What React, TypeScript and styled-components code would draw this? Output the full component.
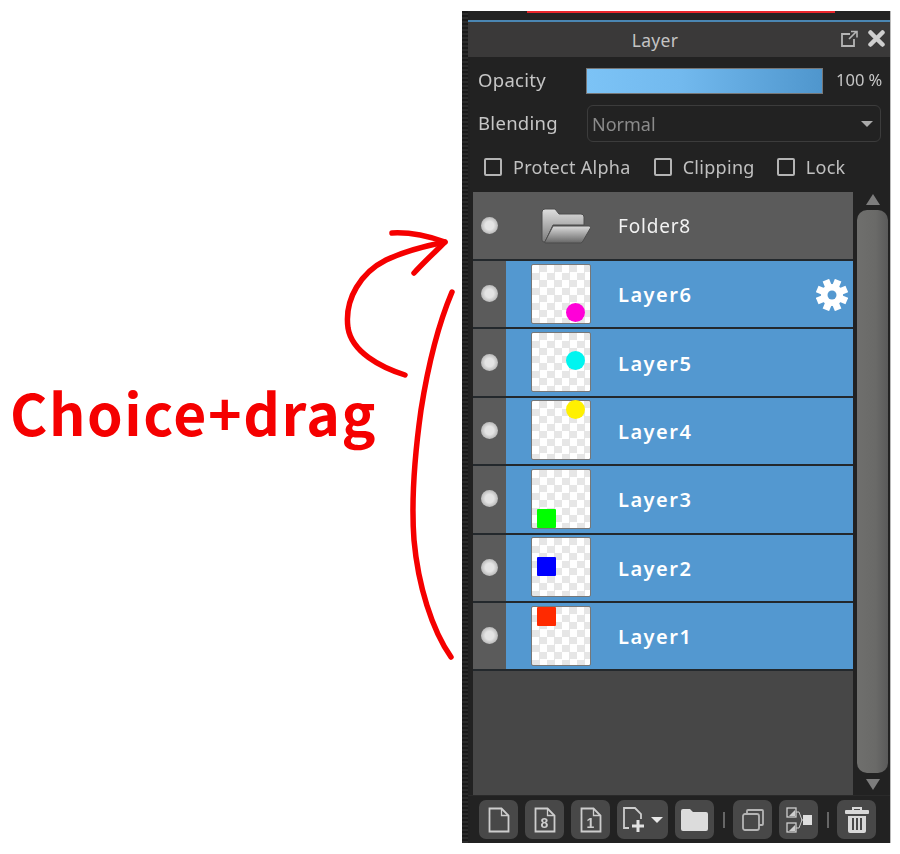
import React from "react"
import styled, { createGlobalStyle } from "styled-components"

const GlobalStyle = createGlobalStyle`
  html, body {
    margin: 0;
    padding: 0;
    background: #fff;
  }
  body {
    width: 900px;
    height: 854px;
    overflow: hidden;
  }
`

const panelFont = `"Noto Sans", "Noto Sans CJK JP", sans-serif`

const Page = styled.div`
  display: flex;
  width: 900px;
  height: 854px;
  background: #fff;
`

const Annotation = styled.div`
  position: relative;
  box-sizing: border-box;
  width: 462px;
  height: 854px;
  padding: 371px 0 0 10px;
`

const Caption = styled.div`
  font-family: "Noto Sans CJK JP", "Noto Sans", sans-serif;
  font-weight: 700;
  font-size: 57px;
  line-height: 80px;
  letter-spacing: 1.6px;
  color: #f50000;
  white-space: nowrap;
`

const ArrowLayer = styled.svg`
  position: absolute;
  left: 0;
  top: 0;
`

const Panel = styled.div`
  display: flex;
  width: 428px;
  height: 832px;
  margin-top: 11px;
  background: #222;
  box-shadow: 1px 0 0 #bbb;
  filter: blur(0.45px);
  font-family: ${panelFont};
`

const Grip = styled.div`
  flex: none;
  width: 6px;
  background: repeating-linear-gradient(0deg, #2c2c2c 0 2px, #1a1a1a 2px 4px);
`

const Body = styled.div`
  flex: 1;
  display: flex;
  flex-direction: column;
  min-width: 0;
`

const TopEdge = styled.div`
  flex: none;
  height: 9px;
  padding-left: 59px;
`

const RedMark = styled.div`
  width: 308px;
  height: 2px;
  background: #e8262c;
`

const TitleBar = styled.div`
  flex: none;
  position: relative;
  display: flex;
  align-items: center;
  justify-content: center;
  height: 35px;
  padding-right: 48px;
  border-top: 2px solid #4a86b3;
  background: #3a3939;
  color: #c4c4c4;
  font-size: 17.5px;
  letter-spacing: 0.3px;
`

const TitleIcons = styled.div`
  position: absolute;
  right: 5px;
  top: 8px;
  display: flex;
  align-items: center;
  gap: 9px;
`

const FieldRow = styled.div<{ $height: number }>`
  flex: none;
  display: flex;
  align-items: center;
  height: ${({ $height }) => $height}px;
  padding-left: 10px;
  color: #c6c6c6;
  font-size: 18.5px;
  letter-spacing: 0.3px;
`

const FieldLabel = styled.span`
  width: 108px;
  flex: none;
  padding-bottom: 3px;
`

const Slider = styled.div`
  flex: none;
  width: 237px;
  height: 26px;
  box-sizing: border-box;
  border: 1px solid #777;
  background: linear-gradient(90deg, #7cc3f6 0%, #72b9ee 40%, #4f96cd 100%);
`

const SliderValue = styled.span`
  margin-left: 13px;
  padding-bottom: 3px;
  font-size: 16.5px;
  letter-spacing: 0;
  white-space: nowrap;
`

const Select = styled.div`
  flex: none;
  display: flex;
  align-items: center;
  justify-content: space-between;
  box-sizing: border-box;
  width: 294px;
  height: 37px;
  margin-left: 1px;
  padding: 0 7px 0 4px;
  border: 1px solid #3c3c3c;
  border-radius: 6px;
  color: #8b8b8b;
  font-size: 18px;
  letter-spacing: 0;
`

const Caret = styled.div<{ $color?: string }>`
  width: 0;
  height: 0;
  border-left: 6px solid transparent;
  border-right: 6px solid transparent;
  border-top: 6px solid ${({ $color }) => $color || "#aaa"};
`

const CheckRow = styled.div`
  flex: none;
  display: flex;
  align-items: center;
  height: 50px;
  padding-left: 16px;
  color: #c0c0c0;
  font-size: 18px;
  letter-spacing: 0.3px;
`

const CheckItem = styled.label<{ $gap: number }>`
  display: flex;
  align-items: center;
  margin-right: ${({ $gap }) => $gap}px;
  white-space: nowrap;
`

const CheckBox = styled.span`
  flex: none;
  width: 18px;
  height: 18px;
  margin-right: 11px;
  box-sizing: border-box;
  border: 2px solid #b4b4b4;
  border-radius: 2px;
`

const ListArea = styled.div`
  flex: 1;
  display: flex;
  min-height: 0;
  padding-left: 5px;
`

const List = styled.div`
  width: 380px;
  flex: none;
  display: flex;
  flex-direction: column;
  background: #474747;
`

const Row = styled.div<{ $height?: number }>`
  flex: none;
  display: flex;
  box-sizing: border-box;
  height: ${({ $height }) => $height || 68.4}px;
  border-bottom: 2px solid #23282c;
  background: #5b5b5b;
`

const EyeCell = styled.div`
  flex: none;
  width: 33px;
  display: flex;
  align-items: center;
  justify-content: center;
  padding-right: 1px;
  box-sizing: border-box;
  background: #5b5b5b;
`

const Eye = styled.div`
  width: 17px;
  height: 17px;
  margin-top: -1px;
  border-radius: 50%;
  background: radial-gradient(circle, #e4e4e4 0 35%, #b4b4b4 75%, #a2a2a2 100%);
`

const RowContent = styled.div<{ $selected?: boolean }>`
  flex: 1;
  display: flex;
  align-items: center;
  min-width: 0;
  background: ${({ $selected }) => ($selected ? "#5398d0" : "#5b5b5b")};
`

const ThumbSlot = styled.div`
  flex: none;
  display: flex;
  align-items: center;
  width: 112px;
  padding-left: 25px;
  box-sizing: border-box;
`

const FolderSlot = styled.div`
  flex: none;
  display: flex;
  width: 112px;
  padding-left: 35px;
  box-sizing: border-box;
`

const Thumb = styled.div`
  position: relative;
  flex: none;
  width: 60px;
  height: 60px;
  margin-top: -1px;
  box-sizing: border-box;
  border: 1px solid #777;
  border-radius: 2px;
  background: repeating-conic-gradient(#e6e6e6 0 25%, #fff 0 50%) 0 0 / 15px 15px;
`

const Mark = styled.span<{ $round?: boolean; $color: string; $left: number; $top: number }>`
  position: absolute;
  left: ${({ $left }) => $left}px;
  top: ${({ $top }) => $top}px;
  width: 19px;
  height: 19px;
  border-radius: ${({ $round }) => ($round ? "50%" : "1px")};
  background: ${({ $color }) => $color};
`

const RowName = styled.span<{ $selected?: boolean }>`
  flex: 1;
  padding-top: 1px;
  color: #fff;
  opacity: ${({ $selected }) => ($selected ? 1 : 0.92)};
  font-size: ${({ $selected }) => ($selected ? 20 : 19)}px;
  font-weight: ${({ $selected }) => ($selected ? 600 : 400)};
  letter-spacing: ${({ $selected }) => ($selected ? 1.5 : 0.8)}px;
`

const GearSlot = styled.div`
  flex: none;
  display: flex;
  margin: 1px 5px 0 0;
`

const ScrollTrack = styled.div`
  flex: 1;
  display: flex;
  flex-direction: column;
  align-items: center;
  padding: 2px 0 5px 2px;
`

const ScrollArrow = styled.div<{ $down?: boolean }>`
  flex: none;
  width: 0;
  height: 0;
  margin: ${({ $down }) => ($down ? "6px 0 0" : "0 0 5px")};
  border-left: 7px solid transparent;
  border-right: 7px solid transparent;
  ${({ $down }) => ($down ? "border-top: 11px solid #7d7d7d;" : "border-bottom: 11px solid #7d7d7d;")}
`

const ScrollThumb = styled.div`
  flex: 1;
  width: 31px;
  border-radius: 10px;
  background: linear-gradient(90deg, #6f6f6d 0%, #6a6a68 60%, #5a5a5a 100%);
`

const Toolbar = styled.div`
  flex: none;
  display: flex;
  align-items: center;
  gap: 7px;
  height: 48px;
  padding: 0 0 0 11px;
  border-top: 1px solid #2a2a2a;
  box-sizing: border-box;
`

const ToolButton = styled.div<{ $wide?: boolean }>`
  flex: none;
  display: flex;
  align-items: center;
  justify-content: center;
  gap: 5px;
  width: ${({ $wide }) => ($wide ? 51 : 39)}px;
  height: 39px;
  box-sizing: border-box;
  border-radius: 7px;
  background: #484848;
`

const ToolSeparator = styled.div`
  flex: none;
  width: 2px;
  height: 16px;
  margin: 0 1px 0 2px;
  background: #666;
`

const iconStroke = "#cdcdcd"

const PageIcon = ({ label }: { label?: string }) => (
  <svg width="22" height="26" viewBox="0 0 22 26" fill="none">
    <path d="M1.500 1.500h12l7 7v16h-19z" stroke={iconStroke} strokeWidth="1.800" />
    <path d="M13.500 1.500v7h7" stroke={iconStroke} strokeWidth="1.300" />
    {label && (
      <text x="10.500" y="21" textAnchor="middle" fontSize="14" fontWeight="700" fontFamily="Liberation Sans, sans-serif" fill={iconStroke}>
        {label}
      </text>
    )}
  </svg>
)

const AddPageIcon = () => (
  <svg width="24" height="28" viewBox="0 0 24 28" fill="none">
    <path d="M7 22H2V2h11l6 6v5" stroke={iconStroke} strokeWidth="1.800" />
    <path d="M16 14v12M10 20h12" stroke="#e2e2e2" strokeWidth="3" />
  </svg>
)

const FolderToolIcon = () => (
  <svg width="27" height="23" viewBox="0 0 27 23">
    <path d="M0 3a2 2 0 0 1 2-2h7l3 3h13a2 2 0 0 1 2 2v15a2 2 0 0 1-2 2H2a2 2 0 0 1-2-2z" fill="#dcdcdc" />
  </svg>
)

const DuplicateIcon = () => (
  <svg width="24" height="24" viewBox="0 0 24 24" fill="none">
    <path d="M6 6V3a1 1 0 0 1 1-1h14a1 1 0 0 1 1 1v13a1 1 0 0 1-1 1h-3" stroke="#b4b4b4" strokeWidth="1.800" />
    <rect x="2" y="6" width="16" height="16" rx="2" stroke="#b4b4b4" strokeWidth="1.800" />
  </svg>
)

const MergeIcon = () => (
  <svg width="26" height="26" viewBox="0 0 26 26" fill="none">
    <rect x="1" y="1" width="9" height="9" stroke={iconStroke} strokeWidth="1.300" />
    <path d="M3 9l6-6v6z" fill={iconStroke} />
    <rect x="1" y="16" width="9" height="9" stroke={iconStroke} strokeWidth="1.300" />
    <path d="M3 24l6-6v6z" fill={iconStroke} />
    <path d="M10 5h3l3 8-3 8h-3M15 13h3" stroke={iconStroke} strokeWidth="1" />
    <rect x="17" y="8" width="9" height="10" fill="#dedede" />
  </svg>
)

const TrashIcon = () => (
  <svg width="24" height="28" viewBox="0 0 24 28" fill="none">
    <path d="M8 4V2h8v2" stroke="#d8d8d8" strokeWidth="2" />
    <rect x="0" y="4" width="24" height="4" rx="1" fill="#d8d8d8" />
    <path d="M3 10h18v15a2 2 0 0 1-2 2H5a2 2 0 0 1-2-2z" fill="#d8d8d8" />
    <path d="M8 12v12M12 12v12M16 12v12" stroke="#484848" strokeWidth="2" />
  </svg>
)

const PopOutIcon = () => (
  <svg width="19" height="17" viewBox="0 0 19 17" fill="none">
    <path d="M10 4H2v12h12V9" stroke="#b5b5b5" strokeWidth="1.800" />
    <path d="M9 9l7-7M11 1.500h6v6" stroke="#b5b5b5" strokeWidth="1.600" />
  </svg>
)

const CloseIcon = () => (
  <svg width="17" height="17" viewBox="0 0 17 17">
    <path d="M2.500 2.500l12 12M14.500 2.500l-12 12" stroke="#cfcfcf" strokeWidth="4.500" strokeLinecap="round" />
  </svg>
)

const FolderIcon = () => (
  <svg width="50" height="36" viewBox="0 0 50 36">
    <defs>
      <linearGradient id="folderBack" x1="0" y1="0" x2="0" y2="1">
        <stop offset="0" stopColor="#dedede" />
        <stop offset="1" stopColor="#7c7c7c" />
      </linearGradient>
      <linearGradient id="folderFront" x1="0" y1="0" x2="0" y2="1">
        <stop offset="0" stopColor="#dcdcdc" />
        <stop offset="1" stopColor="#666" />
      </linearGradient>
    </defs>
    <path d="M1 4a3 3 0 0 1 3-3h10l4 5h22a3 3 0 0 1 3 3v8H12L4 34H3a2 2 0 0 1-2-2z" fill="url(#folderBack)" stroke="#4c4c4c" strokeWidth="1" />
    <path d="M12 18h36a1.500 1.500 0 0 1 1.300 2.200L42 33a3 3 0 0 1-2.500 2H5a1 1 0 0 1-1-1.500z" fill="url(#folderFront)" stroke="#4c4c4c" strokeWidth="1" />
  </svg>
)

const GearIcon = () => (
  <svg width="32" height="32" viewBox="0 0 32 32">
    {[22.5, 67.5, 112.5, 157.5].map((angle) => (
      <rect key={angle} x="12.500" y="0" width="7" height="32" fill="#fff" transform={`rotate(${angle} 16 16)`} />
    ))}
    <circle cx="16" cy="16" r="11" fill="#fff" />
    <circle cx="16" cy="16" r="4.500" fill="#5398d0" />
  </svg>
)

type LayerData = {
  name: string
  color: string
  round?: boolean
  left: number
  top: number
  gear?: boolean
}

const layers: LayerData[] = [
  { name: "Layer6", color: "#ff00d8", round: true, left: 34, top: 38, gear: true },
  { name: "Layer5", color: "#00f5f0", round: true, left: 34, top: 18 },
  { name: "Layer4", color: "#fff000", round: true, left: 34, top: -1 },
  { name: "Layer3", color: "#00ff00", left: 5, top: 39 },
  { name: "Layer2", color: "#0000ff", left: 5, top: 19 },
  { name: "Layer1", color: "#ff2a00", left: 5, top: 0 },
]

export default function App() {
  return (
    <Page>
      <GlobalStyle />
      <Annotation>
        <Caption>Choice+drag</Caption>
        <ArrowLayer width="462" height="854" viewBox="0 0 462 854" fill="none" stroke="#f50000" strokeLinecap="round" strokeLinejoin="round">
          <path d="M405 375C380 367 352 352 348 328C344 298 362 272 386 260C405 251 425 246 445 242" strokeWidth="5.500" />
          <path d="M392 233C410 232 428 236 445 242C435 252 424 262 414 273" strokeWidth="5.500" />
          <path d="M452 292C438 325 427 372 421 410C414 460 411 500 414 540C418 585 432 630 451 657" strokeWidth="5.500" />
        </ArrowLayer>
      </Annotation>
      <Panel>
        <Grip />
        <Body>
          <TopEdge>
            <RedMark />
          </TopEdge>
          <TitleBar>
            Layer
            <TitleIcons>
              <PopOutIcon />
              <CloseIcon />
            </TitleIcons>
          </TitleBar>
          <FieldRow $height={48}>
            <FieldLabel>Opacity</FieldLabel>
            <Slider />
            <SliderValue>100 %</SliderValue>
          </FieldRow>
          <FieldRow $height={37}>
            <FieldLabel>Blending</FieldLabel>
            <Select>
              Normal
              <Caret />
            </Select>
          </FieldRow>
          <CheckRow>
            <CheckItem $gap={23}>
              <CheckBox />
              Protect Alpha
            </CheckItem>
            <CheckItem $gap={22}>
              <CheckBox />
              Clipping
            </CheckItem>
            <CheckItem $gap={0}>
              <CheckBox />
              Lock
            </CheckItem>
          </CheckRow>
          <ListArea>
            <List>
              <Row $height={69}>
                <EyeCell>
                  <Eye />
                </EyeCell>
                <RowContent>
                  <FolderSlot>
                    <FolderIcon />
                  </FolderSlot>
                  <RowName>Folder8</RowName>
                </RowContent>
              </Row>
              {layers.map((layer) => (
                <Row key={layer.name}>
                  <EyeCell>
                    <Eye />
                  </EyeCell>
                  <RowContent $selected>
                    <ThumbSlot>
                      <Thumb>
                        <Mark $round={layer.round} $color={layer.color} $left={layer.left} $top={layer.top} />
                      </Thumb>
                    </ThumbSlot>
                    <RowName $selected>{layer.name}</RowName>
                    {layer.gear && (
                      <GearSlot>
                        <GearIcon />
                      </GearSlot>
                    )}
                  </RowContent>
                </Row>
              ))}
            </List>
            <ScrollTrack>
              <ScrollArrow />
              <ScrollThumb />
              <ScrollArrow $down />
            </ScrollTrack>
          </ListArea>
          <Toolbar>
            <ToolButton>
              <PageIcon />
            </ToolButton>
            <ToolButton>
              <PageIcon label="8" />
            </ToolButton>
            <ToolButton>
              <PageIcon label="1" />
            </ToolButton>
            <ToolButton $wide>
              <AddPageIcon />
              <Caret $color="#e8e8e8" />
            </ToolButton>
            <ToolButton>
              <FolderToolIcon />
            </ToolButton>
            <ToolSeparator />
            <ToolButton>
              <DuplicateIcon />
            </ToolButton>
            <ToolButton>
              <MergeIcon />
            </ToolButton>
            <ToolSeparator />
            <ToolButton>
              <TrashIcon />
            </ToolButton>
          </Toolbar>
        </Body>
      </Panel>
    </Page>
  )
}
